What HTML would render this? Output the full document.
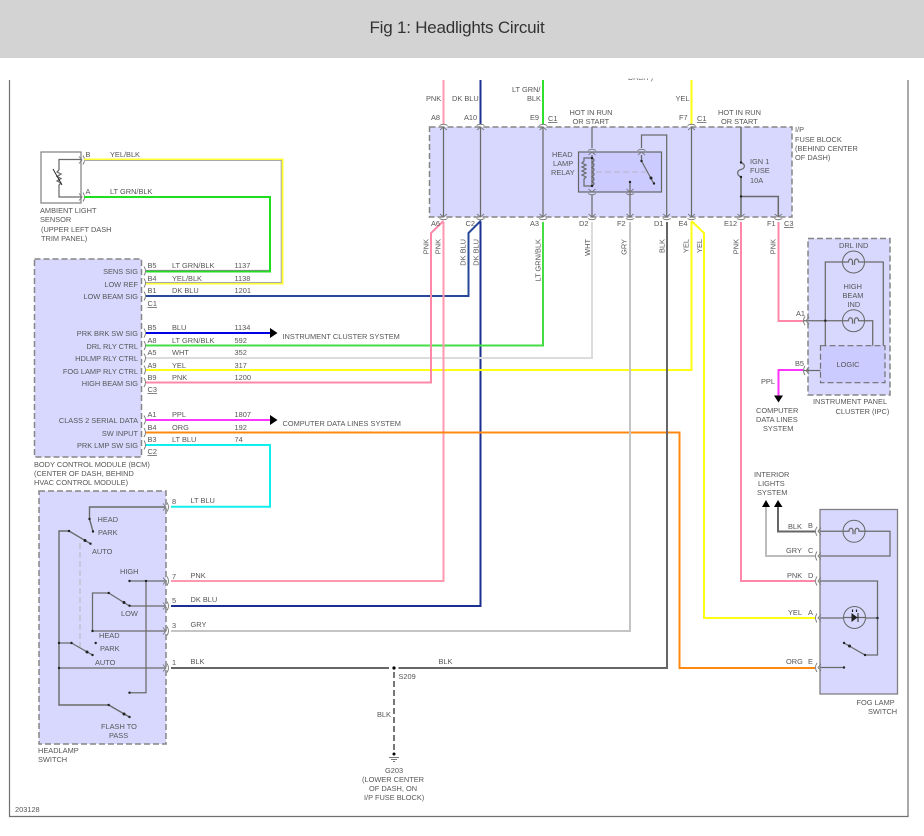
<!DOCTYPE html>
<html><head><meta charset="utf-8"><title>Fig 1: Headlights Circuit</title>
<style>
html,body{margin:0;padding:0;background:#fff;width:924px;height:836px;overflow:hidden}
svg{position:absolute;left:0;top:0;display:block}
text{font-family:"Liberation Sans",sans-serif;font-size:7.4px;fill:#565656}
.t{font-size:17px;fill:#333;letter-spacing:-.22px}
.u{text-decoration:underline}
.i{fill:none;stroke:#6a6a6a;stroke-width:1.25}
.w{fill:none;stroke-width:2}
.d{fill:none;stroke:#858585;stroke-width:1.5;stroke-dasharray:6 3}
.a{fill:none;stroke:#777;stroke-width:.9}
</style></head><body>
<svg width="924" height="836" viewBox="0 0 924 836" xmlns="http://www.w3.org/2000/svg">
<defs>
<g id="r"><path class="a" d="M-3,-3.5L0,0L-3,3.5"/><path class="a" d="M1,-4.5Q4,0 1,4.5"/></g>
<g id="l"><path class="a" d="M3,-3.5L0,0L3,3.5"/><path class="a" d="M-1,-4.5Q-4,0 -1,4.5"/></g>
<g id="b"><path class="a" d="M1,-4.5Q4,0 1,4.5"/></g>
<g id="up"><path class="a" d="M-3.5,3L0,0L3.5,3"/><path class="a" d="M-4,-1.5Q0,-4 4,-1.5"/></g>
<g id="dn"><path class="a" d="M-3.5,-3L0,0L3.5,-3"/><path class="a" d="M-4,1.5Q0,4 4,1.5"/></g>
</defs>
<rect width="924" height="836" fill="#fff"/>

<!-- frame -->
<path d="M9.5,80V816.5H908V80" fill="none" stroke="#707070" stroke-width="1.2"/>

<!-- boxes -->
<rect x="34.5" y="259" width="107" height="198" fill="#d8d8ff" class="d" style="fill:#d8d8ff"/>
<rect x="39" y="491" width="127" height="253" class="d" style="fill:#d8d8ff"/>
<rect x="429.5" y="127" width="362.5" height="90" class="d" style="fill:#d8d8ff"/>
<rect x="808" y="238.5" width="82" height="156.5" class="d" style="fill:#d8d8ff"/>
<rect x="820" y="509.5" width="77.5" height="184.5" fill="#d8d8ff" stroke="#808080" stroke-width="1.3"/>
<rect x="41" y="152" width="40" height="51" fill="#fff" stroke="#888" stroke-width="1.3"/>
<rect x="578.5" y="152" width="83" height="40" fill="#cbcbff" stroke="#666" stroke-width="1.2"/>
<rect x="820.5" y="345.7" width="64.5" height="37" class="d" style="fill:#cbcbff;stroke:#707070;stroke-width:1.2"/>

<!-- sensor inner -->
<path class="i" d="M81,159.5H59V170M59,188V197H81"/>
<path class="i" d="M59,170l-2,2 4,2 -4,2.500 4,2 -4,2.500 4,2 -2,2V188"/>
<path d="M53,169L62,185" stroke="#222" stroke-width=".9" fill="none"/>
<use href="#r" x="82" y="160"/><use href="#r" x="82" y="197"/>

<!-- coloured wires -->
<path class="w" stroke="#ffff33" d="M84,159.500H282.500V283.500H146"/>
<path fill="none" stroke="#a8a8a8" stroke-width="1" d="M84,160.500H281.200V282.500H146"/>
<path class="w" stroke="#1fdd1f" d="M84,197H270V271.500H146"/>
<path fill="none" stroke="#8a8a8a" stroke-width=".8" d="M146,270.300H269"/>
<path class="w" stroke="#26489a" d="M146,296H468.500V233L481,220.500"/>
<path class="w" stroke="#1a2f90" d="M480.500,80V124M480.500,222V606H171"/>
<path class="w" stroke="#0000e8" d="M146,333H271"/>
<path d="M270,328V338L277.500,333Z" fill="#000"/>
<path class="w" stroke="#44dd44" d="M146,345.500H543V222"/>
<path class="w" stroke="#2fe02f" d="M543,80V124"/>
<path class="w" stroke="#dcdcdc" d="M146,358H592V222"/>
<path class="w" stroke="#ffff11" d="M146,370H691.500V222"/>
<path class="w" stroke="#ffff11" d="M691.500,80V124M691.500,221L704,233V618H815"/>
<path class="w" stroke="#ff88a8" d="M146,382.500H431V233L443.500,221"/>
<path class="w" stroke="#ff99b0" d="M443.500,80V124M443.500,222V581H171"/>
<path class="w" stroke="#ff33ff" d="M146,420H271"/>
<path d="M270,415V425L277.500,420Z" fill="#000"/>
<path class="w" stroke="#ff8811" d="M146,432.500H679.500V668H815"/>
<path class="w" stroke="#11eeee" d="M146,445H270V506.700H171"/>
<path class="w" stroke="#c4c4c4" d="M171,631H630V222"/>
<path class="w" stroke="#666" d="M171,668H389M398.500,668H667V222"/>
<path d="M394,672V752" fill="none" stroke="#777" stroke-width="2" stroke-dasharray="6 3"/>
<circle cx="394" cy="668" r="1.600" fill="#000"/><circle cx="394" cy="754" r="1.500" fill="#000"/>
<path d="M389,757.500H399M391,759.500H397M393,761.500H395" stroke="#777" stroke-width="1"/>
<path class="w" stroke="#ff88a8" d="M741,222V581H815"/>
<path class="w" stroke="#ff88a8" d="M778.500,222V321H803"/>
<path class="w" stroke="#ff33ff" d="M803,370H778.500V396"/>
<path d="M774,395.500H783L778.500,402.500Z" fill="#000"/>
<path class="w" stroke="#666" d="M815,531.500H778V507"/>
<path class="w" stroke="#bcbcbc" d="M815,556H766V507"/>
<path d="M762,507H770L766,500Z M774,507H782.500L778,500Z" fill="#000"/>

<!-- BCM connectors -->
<use href="#b" x="143" y="271"/><use href="#b" x="143" y="283"/><use href="#b" x="143" y="296"/>
<use href="#b" x="143" y="333"/><use href="#b" x="143" y="345.500"/><use href="#b" x="143" y="358"/>
<use href="#b" x="143" y="370"/><use href="#b" x="143" y="382.500"/><use href="#b" x="143" y="420"/>
<use href="#b" x="143" y="432.500"/><use href="#b" x="143" y="445"/>

<!-- headlamp switch inner -->
<path class="i" style="stroke-width:1.400" d="M165,507H89.500V519L93,531.500"/>
<path class="i" style="stroke-width:1.400" d="M69,531H59V705H108.700L129.500,717M69,531L90.500,543.700"/>
<path d="M80,543V648" fill="none" stroke="#bbb" stroke-width="1.100" stroke-dasharray="6 3"/>
<path class="i" d="M129.500,581H165M146,581V692.700H129.500"/>
<path class="i" d="M165,606H129.500L108.700,593H92.500V631H165"/>
<path class="i" d="M59,643H71.500L92.500,655M59,668H165"/>
<g fill="#222"><circle cx="89.500" cy="519" r="1.200"/><circle cx="93" cy="531.500" r="1.200"/><circle cx="69" cy="531" r="1.200"/><circle cx="85" cy="540.500" r="1.500"/><circle cx="90.500" cy="543.700" r="1.200"/>
<circle cx="129.500" cy="581" r="1.200"/><circle cx="146" cy="581" r="1.200"/><circle cx="129.500" cy="692.700" r="1.200"/><circle cx="108.700" cy="593" r="1.200"/><circle cx="124" cy="602.500" r="1.500"/><circle cx="129.500" cy="605.700" r="1.200"/><circle cx="92.500" cy="631" r="1.200"/>
<circle cx="59" cy="643" r="1.200"/><circle cx="71.500" cy="643" r="1.200"/><circle cx="87" cy="652" r="1.500"/><circle cx="92.500" cy="655" r="1.200"/><circle cx="95.700" cy="643" r="1.200"/><circle cx="59" cy="668" r="1.200"/><circle cx="108.700" cy="705" r="1.200"/><circle cx="124" cy="714" r="1.500"/><circle cx="129.500" cy="717" r="1.200"/></g>
<use href="#r" x="166" y="507"/><use href="#r" x="166" y="581"/><use href="#r" x="166" y="606"/><use href="#r" x="166" y="631"/><use href="#r" x="166" y="668"/>

<!-- fuse block inner -->
<path class="i" d="M443.500,127V217M480.500,127V217M543,127V217M691.500,127V217"/>
<path class="i" d="M592,127V148M592,155V186M592,195V217M630,182V217M641.500,148V135H666.700V217M641.500,155V161L654,184"/>
<path class="i" style="stroke-width:1.500" d="M741,127V162.500M741,177V217M741,196.500H778.300V217"/>
<path class="i" d="M741,162.500c5,2 4,6 0,7c-4,1 -5,5 0,7.500"/>
<path class="i" d="M592,158H584V161l-2,2 4,2 -4,2 4,2 -4,2 4,2 -4,2 4,2 -2,2V186H592"/>
<path class="i" d="M592,158q4,2 0,4.700q4,2 0,4.700q4,2 0,4.700q4,2 0,4.700q4,2 0,4.700q4,2 0,4.700"/>
<path d="M596,172H650" stroke="#b4b4c8" stroke-width="1.100" stroke-dasharray="6 3" fill="none"/>
<g fill="#222"><circle cx="592" cy="158" r="1.200"/><circle cx="592" cy="186" r="1.200"/><circle cx="630" cy="182" r="1.200"/><circle cx="641.500" cy="161" r="1.200"/><circle cx="651" cy="178" r="1.500"/><circle cx="654" cy="183.500" r="1.200"/><circle cx="741" cy="162.500" r="1.200"/><circle cx="741" cy="177" r="1.200"/><circle cx="741" cy="196.500" r="1.200"/></g>
<use href="#up" x="443.500" y="127"/><use href="#up" x="480.500" y="127"/><use href="#up" x="543" y="127"/><use href="#up" x="691.500" y="127"/>
<use href="#dn" x="443.500" y="217"/><use href="#dn" x="480.500" y="217"/><use href="#dn" x="543" y="217"/><use href="#dn" x="592" y="217"/><use href="#dn" x="630" y="217"/><use href="#dn" x="666.700" y="217"/><use href="#dn" x="691.500" y="217"/><use href="#dn" x="741" y="217"/><use href="#dn" x="778.300" y="217"/>
<use href="#up" x="592" y="152"/><use href="#up" x="641.500" y="152"/><use href="#dn" x="592" y="192"/><use href="#dn" x="630" y="192"/>

<!-- IPC inner -->
<path class="i" d="M825.300,345.700V262H883.300V345.700M803,320.700H872.700V345.700M803,370.500H820.500"/>
<circle cx="825.300" cy="320.700" r="1.200" fill="#222"/>
<g transform="translate(853.500,262)"><circle r="11" fill="#d8d8ff" stroke="#666" stroke-width="1"/><path class="i" d="M-11,0H-5C-5,-4 -1,-4 -1,0V3M1,3V0C1,-4 5,-4 5,0H11"/></g>
<g transform="translate(853.500,320.700)"><circle r="11" fill="#d8d8ff" stroke="#666" stroke-width="1"/><path class="i" d="M-11,0H-5C-5,-4 -1,-4 -1,0V3M1,3V0C1,-4 5,-4 5,0H11"/></g>
<use href="#l" x="806" y="320.700"/><use href="#l" x="806" y="370.500"/>

<!-- fog switch inner -->
<path class="i" d="M820,531.300H890V556H820M820,581H877.500V655H865L844,643M820,618H877.500M820,667.500H844"/>
<g transform="translate(854,531.300)"><circle r="11" fill="#d8d8ff" stroke="#666" stroke-width="1"/><path class="i" d="M-11,0H-5C-5,-4 -1,-4 -1,0V3M1,3V0C1,-4 5,-4 5,0H11"/></g>
<g transform="translate(854.500,617.500)"><circle r="11" fill="#d8d8ff" stroke="#666" stroke-width="1"/><path class="i" d="M-11,0H11"/><path d="M-3,-4.500L3,0L-3,4.500Z" fill="#222"/><path d="M3.500,-4.500V4.500" stroke="#222" stroke-width="1"/><path d="M-2,-8V-5.500M2,-8V-5.500" stroke="#222" stroke-width="1.200"/></g>
<g fill="#222"><circle cx="877.500" cy="618" r="1.200"/><circle cx="865" cy="655" r="1.200"/><circle cx="844" cy="643" r="1.200"/><circle cx="849.500" cy="646" r="1.500"/><circle cx="844" cy="667.500" r="1.200"/></g>
<use href="#l" x="818" y="531.300"/><use href="#l" x="818" y="556"/><use href="#l" x="818" y="581"/><use href="#l" x="818" y="618"/><use href="#l" x="818" y="667.500"/>

<!-- clipped text at top -->
<text x="628" y="80">DASH )</text>
<rect x="0" y="0" width="924" height="78.500" fill="#fff"/>

<!-- header -->
<rect width="924" height="58" fill="#d3d3d3"/>
<text class="t" x="457" y="33" text-anchor="middle">Fig 1: Headlights Circuit</text>

<!-- labels: sensor -->
<text x="85.500" y="157">B</text><text x="110" y="157">YEL/BLK</text>
<text x="85.500" y="194">A</text><text x="110" y="194">LT GRN/BLK</text>
<text x="40" y="213">AMBIENT LIGHT</text><text x="40" y="222">SENSOR</text><text x="41" y="232">(UPPER LEFT DASH</text><text x="41" y="241">TRIM PANEL)</text>

<!-- BCM labels -->
<g text-anchor="end">
<text x="138" y="274">SENS SIG</text><text x="138" y="287">LOW REF</text><text x="138" y="299">LOW BEAM SIG</text>
<text x="138" y="336">PRK BRK SW SIG</text><text x="138" y="349">DRL RLY CTRL</text><text x="138" y="361">HDLMP RLY CTRL</text><text x="138" y="374">FOG LAMP RLY CTRL</text><text x="138" y="386">HIGH BEAM SIG</text>
<text x="138" y="423">CLASS 2 SERIAL DATA</text><text x="138" y="436">SW INPUT</text><text x="138" y="448">PRK LMP SW SIG</text>
</g>
<text x="147.500" y="268">B5</text><text x="172" y="268">LT GRN/BLK</text><text x="234.500" y="268">1137</text>
<text x="147.500" y="281">B4</text><text x="172" y="281">YEL/BLK</text><text x="234.500" y="281">1138</text>
<text x="147.500" y="293">B1</text><text x="172" y="293">DK BLU</text><text x="234.500" y="293">1201</text>
<text class="u" x="147.500" y="306">C1</text>
<text x="147.500" y="330">B5</text><text x="172" y="330">BLU</text><text x="234.500" y="330">1134</text>
<text x="147.500" y="343">A8</text><text x="172" y="343">LT GRN/BLK</text><text x="234.500" y="343">592</text>
<text x="147.500" y="355">A5</text><text x="172" y="355">WHT</text><text x="234.500" y="355">352</text>
<text x="147.500" y="368">A9</text><text x="172" y="368">YEL</text><text x="234.500" y="368">317</text>
<text x="147.500" y="380">B9</text><text x="172" y="380">PNK</text><text x="234.500" y="380">1200</text>
<text class="u" x="147.500" y="392">C3</text>
<text x="147.500" y="417">A1</text><text x="172" y="417">PPL</text><text x="234.500" y="417">1807</text>
<text x="147.500" y="430">B4</text><text x="172" y="430">ORG</text><text x="234.500" y="430">192</text>
<text x="147.500" y="442">B3</text><text x="172" y="442">LT BLU</text><text x="234.500" y="442">74</text>
<text class="u" x="147.500" y="454">C2</text>
<text x="282.500" y="339">INSTRUMENT CLUSTER SYSTEM</text>
<text x="282.500" y="426">COMPUTER DATA LINES SYSTEM</text>
<text x="34" y="467">BODY CONTROL MODULE (BCM)</text><text x="34" y="476">(CENTER OF DASH, BEHIND</text><text x="34" y="485">HVAC CONTROL MODULE)</text>

<!-- headlamp labels -->
<text x="97.500" y="522">HEAD</text><text x="98" y="535">PARK</text><text x="92" y="554">AUTO</text><text x="120" y="574">HIGH</text><text x="121" y="616">LOW</text><text x="99" y="638">HEAD</text><text x="100" y="651">PARK</text><text x="95" y="665">AUTO</text><text x="101" y="729">FLASH TO</text><text x="109" y="738">PASS</text>
<text x="38" y="753">HEADLAMP</text><text x="38" y="762">SWITCH</text>
<text x="172" y="504">8</text><text x="190.500" y="503">LT BLU</text>
<text x="172" y="579">7</text><text x="190.500" y="578">PNK</text>
<text x="172" y="603">5</text><text x="190.500" y="602">DK BLU</text>
<text x="172" y="628">3</text><text x="190.500" y="627">GRY</text>
<text x="172" y="665">1</text><text x="190.500" y="664">BLK</text>

<!-- ground -->
<text x="438.500" y="664">BLK</text><text x="398.500" y="679">S209</text><text x="377" y="717">BLK</text>
<text x="385" y="773">G203</text><text x="362" y="782">(LOWER CENTER</text><text x="369" y="791">OF DASH, ON</text><text x="364" y="800">I/P FUSE BLOCK)</text>
<text x="15" y="812">203128</text>

<!-- fuse block labels -->
<text x="426" y="101">PNK</text><text x="452" y="101">DK BLU</text><text x="512" y="92">LT GRN/</text><text x="527" y="101">BLK</text><text x="675.500" y="101">YEL</text>
<text x="431" y="120">A8</text><text x="464" y="120">A10</text><text x="530" y="120">E9</text><text class="u" x="548" y="121">C1</text><text x="679" y="120">F7</text><text class="u" x="697" y="121">C1</text>
<text x="569.500" y="115">HOT IN RUN</text><text x="572.500" y="124">OR START</text><text x="718" y="115">HOT IN RUN</text><text x="721" y="124">OR START</text>
<text x="795" y="132">I/P</text><text x="795" y="142">FUSE BLOCK</text><text x="795" y="151">(BEHIND CENTER</text><text x="795" y="160">OF DASH)</text>
<text x="552" y="157">HEAD</text><text x="553" y="166">LAMP</text><text x="551" y="175">RELAY</text>
<text x="750" y="164">IGN 1</text><text x="750" y="173">FUSE</text><text x="750" y="183">10A</text>
<text x="431" y="226">A6</text><text x="465.500" y="226">C2</text><text x="530" y="226">A3</text><text x="579" y="226">D2</text><text x="617" y="226">F2</text><text x="654" y="226">D1</text><text x="678.500" y="226">E4</text><text x="724" y="226">E12</text><text x="767" y="226">F1</text><text class="u" x="784" y="226">C3</text>
<g text-anchor="end">
<text transform="translate(428.300,239) rotate(-90)">PNK</text>
<text transform="translate(440.700,239) rotate(-90)">PNK</text>
<text transform="translate(465.300,239) rotate(-90)">DK BLU</text>
<text transform="translate(478.700,239) rotate(-90)">DK BLU</text>
<text transform="translate(540.700,239) rotate(-90)">LT GRN/BLK</text>
<text transform="translate(590,239) rotate(-90)">WHT</text>
<text transform="translate(626.700,239) rotate(-90)">GRY</text>
<text transform="translate(664.300,239) rotate(-90)">BLK</text>
<text transform="translate(688.300,239) rotate(-90)">YEL</text>
<text transform="translate(702,239) rotate(-90)">YEL</text>
<text transform="translate(738.300,239) rotate(-90)">PNK</text>
<text transform="translate(775.700,239) rotate(-90)">PNK</text>
</g>

<!-- IPC labels -->
<text x="839" y="248">DRL IND</text><text x="843.500" y="289">HIGH</text><text x="842.500" y="298">BEAM</text><text x="847.500" y="307">IND</text><text x="836.500" y="367">LOGIC</text>
<text x="796" y="316">A1</text><text x="795" y="366">B5</text><text x="761" y="384">PPL</text>
<text x="813" y="404">INSTRUMENT PANEL</text><text x="835.500" y="414">CLUSTER (IPC)</text>
<text x="756" y="413">COMPUTER</text><text x="756" y="422">DATA LINES</text><text x="763" y="431">SYSTEM</text>

<!-- fog labels -->
<text x="754" y="477">INTERIOR</text><text x="758" y="486">LIGHTS</text><text x="757" y="495">SYSTEM</text>
<text x="788" y="529">BLK</text><text x="808" y="528">B</text>
<text x="786" y="553">GRY</text><text x="808" y="553">C</text>
<text x="787" y="578">PNK</text><text x="808" y="578">D</text>
<text x="788" y="615">YEL</text><text x="808" y="615">A</text>
<text x="786" y="664">ORG</text><text x="808" y="664">E</text>
<text x="856.500" y="705">FOG LAMP</text><text x="868" y="714">SWITCH</text>
</svg>
</body></html>
